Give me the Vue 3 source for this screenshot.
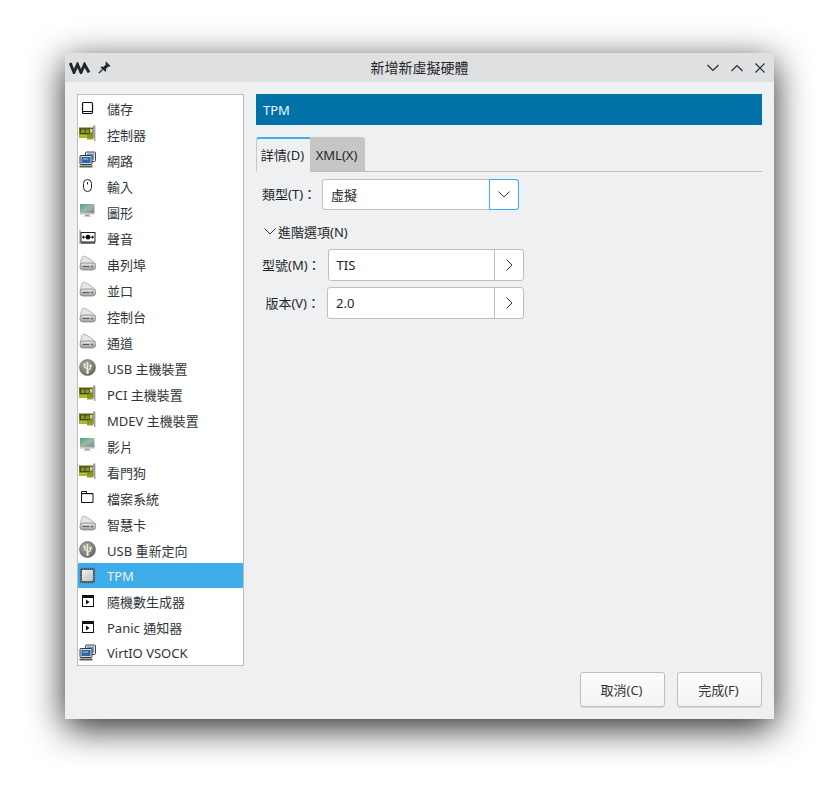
<template>
  <div class="page">
    <svg class="defs" width="0" height="0">
      <defs>
        <linearGradient id="screen" x1="0" y1="0" x2="1" y2="1">
          <stop offset="0" stop-color="#4f9c9c" />
          <stop offset="0.5" stop-color="#9dbb9c" />
          <stop offset="1" stop-color="#7c7f9c" />
        </linearGradient>
        <linearGradient id="drive" x1="0" y1="0" x2="0" y2="1">
          <stop offset="0" stop-color="#e8e8e8" />
          <stop offset="1" stop-color="#9c9c9c" />
        </linearGradient>
        <linearGradient id="chipface" x1="0" y1="0" x2="1" y2="1">
          <stop offset="0" stop-color="#f4f4f2" />
          <stop offset="1" stop-color="#bdbdb9" />
        </linearGradient>
        <linearGradient id="cardbody" x1="0" y1="0" x2="0" y2="1">
          <stop offset="0" stop-color="#5f6b18" />
          <stop offset="1" stop-color="#98a620" />
        </linearGradient>
        <radialGradient id="usbball" cx="0.4" cy="0.35" r="0.7">
          <stop offset="0" stop-color="#b4b4ae" />
          <stop offset="1" stop-color="#64645e" />
        </radialGradient>

        <symbol id="i-disk" viewBox="0 0 18 18">
          <rect x="3.5" y="3.5" width="10" height="11" rx="1.2" fill="#fff" stroke="#111" stroke-width="1.2" />
          <path d="M4 12.500h9" stroke="#111" />
        </symbol>

        <symbol id="i-card" viewBox="0 0 18 18">
          <path d="M0 2.500h14v12H8V13H0z" fill="url(#cardbody)" />
          <path d="M1 3.500h9.500V9H1z" fill="#434a1a" />
          <path d="M2 4.500h3.500v3.500H2zM6.500 4.500H10v3.500H6.500z" fill="#87962c" />
          <path d="M0 10h8v.8H0zM0 11.600h8v.8H0z" fill="#cdd43e" />
          <path d="M11 4h2.500v3.500H11z" fill="#cfd092" />
          <path d="M14 .5h2.400v15.500H15v-2.500h-1z" fill="#9e9e9e" />
        </symbol>

        <symbol id="i-net" viewBox="0 0 18 18">
          <rect x="6.500" y="1" width="10" height="9.500" rx="1" fill="#dfe4ea" stroke="#45494d" />
          <rect x="8" y="2.500" width="7" height="6" fill="#6f98c8" />
          <rect x="1" y="4.500" width="12" height="9" rx="1" fill="#d8d8d8" stroke="#33373b" />
          <rect x="2.500" y="6" width="9" height="6" fill="#2a67ac" />
          <path d="M4 8h5" stroke="#a8cdf0" />
          <path d="M0.500 15.500h13" stroke="#5a5a5a" stroke-width="2" />
        </symbol>

        <symbol id="i-mouse" viewBox="0 0 18 18">
          <rect x="4.500" y="2.500" width="8" height="12" rx="4" fill="#fff" stroke="#222" />
          <path d="M8.500 5v2.500" stroke="#222" />
        </symbol>

        <symbol id="i-monitor" viewBox="0 0 18 18">
          <rect x="1" y="1" width="14.500" height="9.500" fill="url(#screen)" />
          <path d="M1 10.500h14.500v1.200H1z" fill="#c9c9c9" />
          <path d="M6 11.700h4.500v1.500H6z" fill="#9c9c9c" />
          <path d="M4.500 13.200h7.500v.8H4.500z" fill="#c4c4c4" />
        </symbol>

        <symbol id="i-sound" viewBox="0 0 18 18">
          <path d="M1 1v14" stroke="#8a8a8a" />
          <rect x="2" y="3.500" width="14" height="9.500" fill="#fff" stroke="#222" />
          <path d="M3 8.200h3.500M11.500 8.200H15" stroke="#222" stroke-width="1.200" />
          <circle cx="9" cy="8.200" r="2.400" fill="#111" />
          <path d="M4.500 6.800v3M13.500 6.800v3" stroke="#222" />
          <path d="M2 14h14" stroke="#222" stroke-width="1.200" />
        </symbol>

        <symbol id="i-drive" viewBox="0 0 18 18">
          <path d="M1.500 9C2 5 3 1.500 4.500 1.200 6.500 1 13 5 16.500 9z" fill="#e6e6e6" stroke="#a6a6a6" stroke-width="0.9" />
          <rect x="1" y="8" width="15.500" height="7" rx="3" fill="url(#drive)" stroke="#848484" stroke-width="0.8" />
          <path d="M3.500 11.500h7" stroke="#5e5e5e" stroke-width="1.100" />
          <circle cx="13.200" cy="11.500" r="1" fill="#5e5e5e" />
        </symbol>

        <symbol id="i-usb" viewBox="0 0 18 18">
          <circle cx="8.500" cy="8.500" r="8" fill="url(#usbball)" stroke="#5e5e58" stroke-width="0.6" />
          <path d="M8.500 3v10" stroke="#f0eed8" stroke-width="1.300" />
          <path d="M8.500 10L5.500 8V6M8.500 11.500l3-2V7.500" fill="none" stroke="#f0eed8" stroke-width="1.100" />
          <circle cx="5.500" cy="5.500" r="1.100" fill="#f0eed8" />
          <rect x="10.400" y="5.800" width="2.200" height="2.200" fill="#f0eed8" />
          <circle cx="8.500" cy="13.500" r="1.400" fill="#f0eed8" />
        </symbol>

        <symbol id="i-folder" viewBox="0 0 18 18">
          <path d="M2.500 2.500h5v2h6.500v9H2.500z" fill="#fff" stroke="#111" />
          <path d="M2.500 4.600h11.500" stroke="#111" stroke-width="1.200" />
        </symbol>

        <symbol id="i-chip" viewBox="0 0 18 18">
          <rect x="1.500" y="1.500" width="14" height="14" rx="1.500" fill="#5c6670" stroke="#47505a" stroke-width="1.400" stroke-dasharray="1.200 0.800" />
          <rect x="3" y="3" width="11" height="11" rx="1" fill="url(#chipface)" />
        </symbol>

        <symbol id="i-rng" viewBox="0 0 18 18">
          <rect x="3.500" y="3.500" width="11" height="11" fill="#fff" stroke="#111" />
          <path d="M3.500 5h11" stroke="#111" stroke-width="2" />
          <path d="M7 7.500v5l3.500-2.500z" fill="#111" />
        </symbol>
      </defs>
    </svg>

    <div class="window">
      <div class="titlebar">
        <div class="title-left">
          <svg class="vm-logo" viewBox="0 0 22 12" width="22" height="12">
            <path d="M1.200 1L5 10.500 8.500 2.500 12 10.500 15.500 2.500 20 10.500" fill="none" stroke="#232629" stroke-width="2.900" />
          </svg>
          <svg class="pin" viewBox="0 0 13 13" width="13" height="13">
            <path d="M8 .5l4.500 4.500-1 .7-1-.3-2.600 2.600.4 1.800-1 1L2.500 6.500l1-1 1.800.4L8 3.300 7.500 2z" fill="#232629" />
            <path d="M.8 12.200L4.500 8.500" stroke="#232629" stroke-width="1.200" />
          </svg>
        </div>
        <div class="title">新增新虛擬硬體</div>
        <div class="title-btns">
          <svg viewBox="0 0 12 8" width="12" height="8"><path d="M.5 1l5.500 5.500L11.500 1" /></svg>
          <svg viewBox="0 0 12 8" width="12" height="8"><path d="M.5 7L6 1.500 11.500 7" /></svg>
          <svg viewBox="0 0 10 10" width="10" height="10"><path d="M.5.5l9 9M9.500.5l-9 9" /></svg>
        </div>
      </div>

      <div class="content">
        <ul class="hw-list">
          <li
            v-for="item in hardware"
            :key="item.label"
            class="hw-item"
            :class="{ selected: item.label === 'TPM', short: item.short }"
          >
            <svg class="hw-icon" width="18" height="18"><use :href="'#i-' + item.icon" /></svg>
            <span>{{ item.label }}</span>
          </li>
        </ul>

        <div class="panel">
          <div class="panel-head">TPM</div>

          <div class="tabs">
            <div class="tab active">詳情(D)</div>
            <div class="tab">XML(X)</div>
          </div>

          <div class="form">
            <div class="type-row">
              <label class="label">類型(T)：</label>
              <div class="combo">
                <span class="value">虛擬</span>
                <span class="combo-btn">
                  <svg viewBox="0 0 12 7" width="12" height="7"><path d="M.5 .5L6 6l5.500-5.500" /></svg>
                </span>
              </div>
            </div>

            <div class="expander">
              <svg viewBox="0 0 12 7" width="12" height="7"><path d="M.5 .5L6 6l5.500-5.500" /></svg>
              <span>進階選項(N)</span>
            </div>

            <div v-for="row in advanced" :key="row.label" class="adv-row">
              <label class="label">{{ row.label }}</label>
              <div class="picker">
                <span class="value">{{ row.value }}</span>
                <span class="picker-btn">
                  <svg viewBox="0 0 7 12" width="7" height="12"><path d="M.5 .5L6 6 .5 11.500" /></svg>
                </span>
              </div>
            </div>
          </div>
        </div>
      </div>

      <div class="footer">
        <button class="btn">取消(C)</button>
        <button class="btn">完成(F)</button>
      </div>
    </div>
  </div>
</template>

<script setup>
const hardware = [
  { label: '儲存', icon: 'disk' },
  { label: '控制器', icon: 'card' },
  { label: '網路', icon: 'net' },
  { label: '輸入', icon: 'mouse' },
  { label: '圖形', icon: 'monitor' },
  { label: '聲音', icon: 'sound' },
  { label: '串列埠', icon: 'drive' },
  { label: '並口', icon: 'drive' },
  { label: '控制台', icon: 'drive' },
  { label: '通道', icon: 'drive' },
  { label: 'USB 主機裝置', icon: 'usb' },
  { label: 'PCI 主機裝置', icon: 'card' },
  { label: 'MDEV 主機裝置', icon: 'card' },
  { label: '影片', icon: 'monitor' },
  { label: '看門狗', icon: 'card' },
  { label: '檔案系統', icon: 'folder' },
  { label: '智慧卡', icon: 'drive' },
  { label: 'USB 重新定向', icon: 'usb' },
  { label: 'TPM', icon: 'chip', short: true },
  { label: '隨機數生成器', icon: 'rng' },
  { label: 'Panic 通知器', icon: 'rng' },
  { label: 'VirtIO VSOCK', icon: 'net', short: true },
]

const advanced = [
  { label: '型號(M)：', value: 'TIS' },
  { label: '版本(V)：', value: '2.0' },
]
</script>

<style>
html,
body {
  background: #fff;
}
</style>

<style scoped>
.page {
  width: 839px;
  height: 796px;
  padding: 53px 65px 77px;
  box-sizing: border-box;
  font-family: "Noto Sans", "Noto Sans CJK TC", sans-serif;
  font-size: 13px;
  color: #232629;
  overflow: hidden;
}
.defs {
  position: absolute;
}
.window {
  height: 666px;
  display: flex;
  flex-direction: column;
  background: #eff0f1;
  border-radius: 3px 3px 0 0;
  box-shadow: 0 9px 36px rgba(0, 0, 0, 0.85);
}
.titlebar {
  height: 29px;
  flex: none;
  display: grid;
  grid-template-columns: 1fr auto 1fr;
  align-items: center;
  padding: 0 9px;
  background: #dee0e2;
  border-radius: 3px 3px 0 0;
}
.title-left {
  display: flex;
  align-items: center;
  gap: 7px;
  margin-left: -5px;
}
.title {
  text-align: center;
  font-size: 14px;
  padding-bottom: 1px;
}
.title-btns {
  display: flex;
  align-items: center;
  justify-content: flex-end;
  gap: 12px;
}
.title-btns svg {
  fill: none;
  stroke: #232629;
  stroke-width: 1.1;
}
.content {
  flex: 1;
  min-height: 0;
  display: flex;
  gap: 12px;
  padding: 12px 12px 0;
}
.hw-list {
  list-style: none;
  margin: 0;
  padding: 0;
  width: 167px;
  flex: none;
  box-sizing: border-box;
  background: #fff;
  border: 1px solid #bcbebf;
}
.hw-item {
  height: 26px;
  display: flex;
  align-items: center;
  gap: 10px;
  padding-left: 1px;
  white-space: nowrap;
  color: #31363b;
}
.hw-item.short {
  height: 25px;
}
.hw-item.selected {
  background: #3daee9;
  color: #eff0f1;
}
.hw-icon {
  flex: none;
}
.panel {
  flex: 1;
  min-width: 0;
}
.panel-head {
  height: 31px;
  line-height: 33px;
  padding-left: 7px;
  background: #0072a8;
  color: #f4f7f9;
}
.tabs {
  display: flex;
  margin-top: 12px;
  height: 35px;
  border-bottom: 1px solid #bcbebf;
  box-sizing: border-box;
}
.tab {
  width: 55px;
  box-sizing: border-box;
  text-align: center;
  line-height: 34px;
  padding-right: 2px;
  background: #c6c6c6;
  border-radius: 0 3px 0 0;
  border-top: 1px solid #c6c6c6;
  color: #232629;
}
.tab.active {
  width: 54px;
  background: #eff0f1;
  border-top: 2px solid #3daee9;
  border-left: 1px solid #c6c8c9;
  border-radius: 3px 0 0 0;
  line-height: 33px;
  height: 35px;
}
.form {
  padding: 7px 0 0 6px;
}
.type-row {
  display: flex;
  align-items: center;
  gap: 6px;
}
.label {
  white-space: nowrap;
  padding-bottom: 2px;
}
.combo,
.picker {
  display: flex;
  align-items: center;
  box-sizing: border-box;
  background: #fff;
  border: 1px solid #bcbebf;
  border-radius: 3px;
  height: 32px;
}
.combo {
  width: 197px;
  height: 31px;
}
.combo .value {
  padding-bottom: 1px;
}
.value {
  flex: 1;
  padding-left: 8px;
}
.combo-btn,
.picker-btn {
  display: flex;
  align-items: center;
  justify-content: center;
  align-self: stretch;
  flex: none;
  border-left: 1px solid #bcbebf;
}
.combo-btn {
  width: 28px;
  margin: -1px -1px -1px 0;
  border: 1px solid #3daee9;
  border-radius: 0 3px 3px 0;
}
.picker-btn {
  width: 28px;
}
.combo-btn svg,
.picker-btn svg,
.expander svg {
  fill: none;
  stroke: #31363b;
  stroke-width: 1;
}
.expander {
  display: flex;
  align-items: center;
  gap: 2px;
  height: 20px;
  margin-top: 11px;
  margin-bottom: 8px;
  padding-left: 2px;
}
.adv-row {
  display: flex;
  align-items: center;
  justify-content: flex-end;
  gap: 7px;
  width: 262px;
  margin-bottom: 6px;
}
.picker {
  width: 197px;
}
.footer {
  flex: none;
  height: 53px;
  box-sizing: border-box;
  display: flex;
  justify-content: flex-end;
  gap: 12px;
  padding: 6px 12px 0;
}
.btn {
  width: 85px;
  height: 35px;
  font: inherit;
  color: #31363b;
  border: 1px solid #bcbebf;
  border-radius: 3px;
  background: linear-gradient(#fcfcfc, #f3f4f4);
  box-shadow: 0 1px 1px rgba(0, 0, 0, 0.1);
  padding: 0 2px 0 0;
}
</style>
